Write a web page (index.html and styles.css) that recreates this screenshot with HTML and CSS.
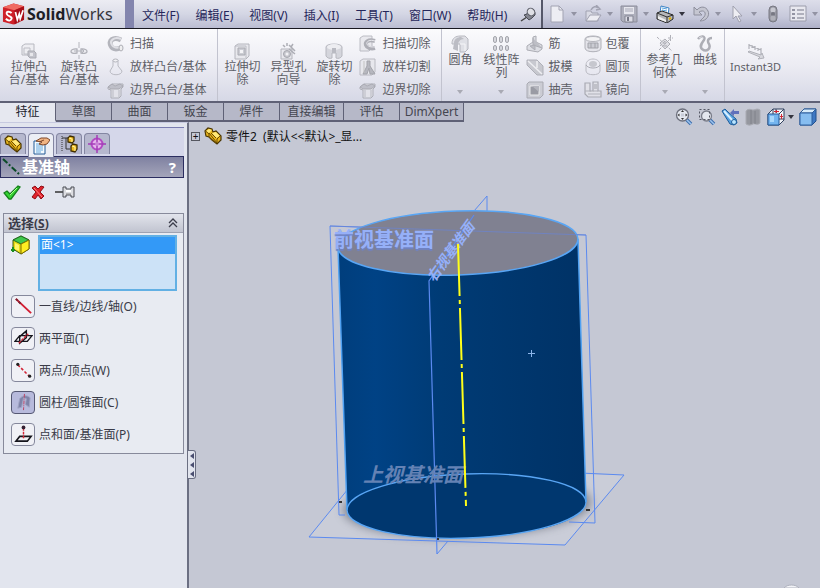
FILE: index.html
```
<!DOCTYPE html>
<html lang="zh-CN">
<head>
<meta charset="utf-8">
<title>SolidWorks</title>
<link rel="stylesheet" href="styles.css">
</head>
<body>
<svg class="sprite" aria-hidden="true">
  <defs>
    <linearGradient id="g-steel" x1="0" y1="0" x2="1" y2="1"><stop offset="0" stop-color="#ececf0"/><stop offset="1" stop-color="#9a9ba3"/></linearGradient>
    <symbol id="extrude" viewBox="0 0 18 18"><path d="M2 4l3-2h9v9l-3 2H2z" fill="#eeeef2" stroke="#adaeb6"/><path d="M4 6h6v6H4z" fill="none" stroke="#b5b6be"/><path d="M8 9h6l2 2v5h-6l-2-2z" fill="#bbbcc4" stroke="#9fa0a8"/><path d="M10 11h3v3h-3z" fill="#e6e6ea"/></symbol>
    <symbol id="revolve" viewBox="0 0 18 18"><path d="M9 0v6M9 13v4" stroke="#a9aab2"/><path d="M7 11c-8 2-8-5 0-4v4zM11 11c8 2 8-5 0-4v4z" fill="#ececf0" stroke="#a5a6ae" stroke-width="1.3"/><path d="M4 9h10M12 7l2 2-2 2" fill="none" stroke="#a9aab2"/></symbol>
    <symbol id="sweep" viewBox="0 0 18 18"><path d="M14 5C6 1 1 6 4 11c2 4 7 3 10 2" fill="none" stroke="#a9aab2" stroke-width="5"/><path d="M14 4C7 1 2 6 5 10c2 3 6 3 9 2" fill="none" stroke="#dcdce2" stroke-width="2"/><ellipse cx="14" cy="13" rx="2" ry="3" fill="#eee" stroke="#a0a1a9"/></symbol>
    <symbol id="loft" viewBox="0 0 18 18"><path d="M6 2h5v6l4 5c0 5-12 5-12 0l3-5z" fill="url(#g-steel)" stroke="#b1b2ba"/><ellipse cx="8.500" cy="2.500" rx="2.500" ry="1.500" fill="#f3f3f5" stroke="#a9aab2"/></symbol>
    <symbol id="boundary" viewBox="0 0 18 18"><path d="M1 6l4-3h11v3l-2 2v7l-2 2H4V9L1 8z" fill="#e4e4ea" stroke="#a5a6ae"/><path d="M1 6l4-3 3 2 5-2 3 2-4 3H4z" fill="#b9bac2" stroke="#a0a1a9"/><path d="M6 9v7M12 9v7" fill="none" stroke="#b3b4bc"/></symbol>
    <symbol id="cut-extrude" viewBox="0 0 18 18"><path d="M2 4l3-2h11v12l-3 3H2z" fill="#e7e7ec" stroke="#a9aab2"/><path d="M2 4h11v12" fill="none" stroke="#b3b4bc"/><path d="M5 6h7v7H5z" fill="#c6c7ce" stroke="#9d9ea6"/><path d="M7 8h3v3H7z" fill="#f5f5f7"/></symbol>
    <symbol id="hole" viewBox="0 0 18 18"><path d="M2 7h11v10H2z" fill="#e7e7ec" stroke="#a9aab2"/><circle cx="8" cy="12" r="3.500" fill="#c0c1c8" stroke="#999aa2"/><circle cx="8" cy="12" r="1.500" fill="#f2f2f4"/><path d="M10 7l6 5M8 1v3M4 3l2 2M12 5l2-3M10 3l6 6" stroke="#a0a1a9" stroke-width="1.500"/></symbol>
    <symbol id="cut-revolve" viewBox="0 0 18 18"><path d="M1 5c0-4 16-4 16 0v9c-1 2-4 3-6 2v-5H7v5c-2 1-5 0-6-2z" fill="#d0d1d8" stroke="#acadb5"/><ellipse cx="9" cy="5" rx="7" ry="3" fill="#ececf0"/><path d="M7 6h4v5H7z" fill="#b0b1b9"/></symbol>
    <symbol id="cut-sweep" viewBox="0 0 18 18"><path d="M1 3l3-2h9v12l-3 3H1z" fill="#e7e7ec" stroke="#b1b2ba"/><path d="M16 6C9 4 6 7 7 10c1 3 5 4 9 3" fill="none" stroke="#a2a3ab" stroke-width="4"/><path d="M16 6C10 4 7 7 8 9c1 3 4 3 8 3" fill="none" stroke="#e7e7ec"/></symbol>
    <symbol id="cut-loft" viewBox="0 0 18 18"><path d="M1 3l3-2h12v13l-3 3H1z" fill="#e7e7ec" stroke="#b1b2ba"/><path d="M8 3h3v5l5 8h-5l-1-6-2 6H4l4-8z" fill="#aeafb7" stroke="#97989f"/><path d="M5 3v12" stroke="#bbb"/></symbol>
    <symbol id="fillet" viewBox="0 0 18 18"><path d="M1 8c0-5 4-7 8-7h5l3 3v10l-3 3H9V9H1z" fill="#dcdde3" stroke="#adaeb6"/><path d="M3 8c0-4 4-6 7-6l3 2c-4 0-6 3-6 6v6l-5-2z" fill="#b2b3bb"/><path d="M9 9h5v7" fill="none" stroke="#f7f7f9"/></symbol>
    <symbol id="pattern" viewBox="0 0 18 18"><g fill="#d2d3da" stroke="#96979f"><rect x="1.500" y="1.500" width="3" height="6" rx="1.500"/><rect x="7.500" y="1.500" width="3" height="6" rx="1.500"/><rect x="13.500" y="1.500" width="3" height="6" rx="1.500"/><rect x="1.500" y="10.500" width="3" height="5" rx="1.500"/><rect x="7.500" y="10.500" width="3" height="5" rx="1.500"/><rect x="13.500" y="10.500" width="3" height="5" rx="1.500"/></g></symbol>
    <symbol id="rib" viewBox="0 0 18 18"><path d="M1 11l6-4V2l3-1v6l6 3v4l-4 3-11-2z" fill="#dadbe1" stroke="#9fa0a8"/><path d="M7 3v7l9 3M4 11l5-1v5z" fill="#b4b5bd" stroke="#a2a3ab"/></symbol>
    <symbol id="draft" viewBox="0 0 18 18"><path d="M1 2h10l6 6v9h-6L1 7z" fill="#c2c3ca" stroke="#a5a6ae"/><path d="M2 3l14 13M11 3v7" stroke="#efeff2" stroke-width="1.500"/></symbol>
    <symbol id="shell" viewBox="0 0 18 18"><path d="M1 3l2-2h14v13l-3 3H1z" fill="#c9cad1" stroke="#a0a1a9"/><path d="M4 5h9v9H4z" fill="#8f9098" stroke="#eee"/><path d="M6 5l7 6V5z" fill="#adaeb6"/></symbol>
    <symbol id="wrap" viewBox="0 0 18 18"><path d="M1 4c0-4 16-4 16 0v9c0 5-16 5-16 0z" fill="#e2e2e8" stroke="#a3a4ac"/><ellipse cx="9" cy="4" rx="7.500" ry="2.500" fill="#f3f3f5" stroke="#a9aab2"/><path d="M4 8h10v5H4zM7 8v5M11 8v5" fill="#c5c6cd" stroke="#94959d"/></symbol>
    <symbol id="dome" viewBox="0 0 18 18"><path d="M2 7c0-8 14-8 14 0v6c0 5-14 5-14 0z" fill="url(#g-steel)" stroke="#b1b2ba"/><path d="M2 7c2 4 12 4 14 0" fill="none" stroke="#9d9ea6"/><ellipse cx="9" cy="6" rx="4" ry="3" fill="#c0c1c8"/></symbol>
    <symbol id="mirror" viewBox="0 0 18 18"><path d="M1 2h5v8h3V1h5v9h3v6H4l-3-3z" fill="#e2e2e8" stroke="#a0a1a9" stroke-width="1.200"/><path d="M1 10h6M9 10h5M4 13h12" stroke="#a9aab2"/><path d="M10 3h3v5h-3z" fill="#bbbcc4"/></symbol>
    <symbol id="refgeo" viewBox="0 0 18 18"><path d="M4 8l5-4 5 5-5 5z" fill="#dcdce2" stroke="#a0a1a9"/><path d="M1 2l15 14M3 15L15 3M9 6v6M12 3h5M14.500 0v6M4 11l5-5" stroke="#a3a4ac" stroke-dasharray="3 1"/></symbol>
    <symbol id="curve" viewBox="0 0 18 18"><path d="M2 4c3-4 8-3 6 1-2 3-5 6-2 9 5 4 9-1 7-5-2-3-1-6 3-6" fill="none" stroke="#a1a2aa" stroke-width="2.500"/><path d="M3 3c3-2 5-1 3 2" fill="none" stroke="#e1e1e6"/></symbol>
    <symbol id="instant" viewBox="0 0 18 18"><path d="M2 2v5M2 3l12 5M14 6v7M5 3v3M8 4v4M11 6v3" stroke="#a5a6ae" fill="none" stroke-width="1.200"/><path d="M1 10l12 5-2 2 6-1-2-5-1 2-12-4z" fill="#d4d5db" stroke="#a5a6ae"/></symbol>
    <symbol id="pin" viewBox="0 0 18 18"><path d="M2 15l6-4" stroke="#444" stroke-width="1.500"/><path d="M5 9l3-1 1-4c2-3 8 0 7 5l-3 3-3 2z" fill="#83858f" stroke="#4a4c56"/><ellipse cx="12" cy="6" rx="4" ry="3.500" transform="rotate(42 12 6)" fill="#dfe0e6" stroke="#5a5c66"/></symbol>
    <symbol id="new" viewBox="0 0 18 18"><path d="M3 1h8l4 4v12H3z" fill="#ededf3" stroke="#a2a3b2"/><path d="M11 1v4h4" fill="none" stroke="#a2a3b2"/></symbol>
    <symbol id="open" viewBox="0 0 18 18"><path d="M2 16V6h5l1 2h6v8z" fill="#d9dae4" stroke="#a1a2b1"/><path d="M2 16l4-6h11l-4 6z" fill="#ececf2" stroke="#a1a2b1"/><path d="M7 5c2-4 5-4 7-2M12 0l4 4-4 1" fill="none" stroke="#a1a2b1" stroke-width="1.500"/></symbol>
    <symbol id="save" viewBox="0 0 18 18"><path d="M1 1h16v16H3l-2-2z" fill="#aeafbc" stroke="#8c8d9b"/><path d="M4 2h10v7H4z" fill="#e7e7ee"/><path d="M5 4h8M5 6h8" stroke="#a8a9b7"/><path d="M5 11h8v6H5z" fill="#dddde6" stroke="#858694"/><path d="M7 12h2v4H7z" fill="#777886"/></symbol>
    <symbol id="print" viewBox="0 0 18 18"><path d="M4 8l1-7 8 2-1 7z" fill="#fff" stroke="#3a82c5"/><path d="M6 3l5 1M6 5l5 1" stroke="#55a2df"/><path d="M1 8l5-2 11 4v4l-6 4-10-4z" fill="#b7b8bb" stroke="#222"/><path d="M1 8l10 4 6-2M11 12v5" fill="none" stroke="#333"/><path d="M2 11l8 4v2l-8-3z" fill="#eee"/><path d="M13 14l2-1" stroke="#e0b000" stroke-width="2"/></symbol>
    <symbol id="undo" viewBox="0 0 18 18"><path d="M2 2v8h8L7 7c5-3 8 1 5 5l-4 4c7 0 10-6 8-10C14 1 8 1 5 5z" fill="#c5c6d1" stroke="#8e8f9d"/></symbol>
    <symbol id="cursor" viewBox="0 0 18 18"><path d="M5 1v13l3-3 3 6 2-1-3-5h4z" fill="#eeeef3" stroke="#9fa0ae"/></symbol>
    <symbol id="traffic" viewBox="0 0 18 18"><rect x="5" y="1" width="8" height="16" rx="4" fill="#9899a3" stroke="#787983"/><circle cx="9" cy="5" r="2.500" fill="#c7c8d0"/><circle cx="9" cy="9" r="2" fill="#777882"/><circle cx="9" cy="13" r="2.500" fill="#b0b1b9"/></symbol>
    <symbol id="options" viewBox="0 0 18 18"><path d="M1 1h16v15H1z" fill="#e8e8ef" stroke="#9b9cab"/><path d="M3 4h3v2H3zM3 8h3v2H3zM3 12h3v2H3z" fill="#9394a3"/><path d="M8 5h7M8 9h7M8 13h7" stroke="#9c9dac" stroke-width="1.500"/></symbol>
    <symbol id="zoomfit" viewBox="0 0 18 18"><path d="M11 11l5 5" stroke="#3e6fae" stroke-width="3.500"/><path d="M11 11l5 5" stroke="#9dc4ee" stroke-width="1.500"/><circle cx="7.500" cy="7" r="6" fill="#e4e7ef" stroke="#6d707d" stroke-width="1.300"/><path d="M7.500 2l1.500 2H6zM7.500 12L6 10h3zM2.500 7l2-1.500v3zM12.500 7l-2-1.500v3z" fill="#333"/><path d="M6 5.500h3v3H6z" fill="#c8ccd8"/></symbol>
    <symbol id="zoomarea" viewBox="0 0 18 18"><path d="M11 11l5 5" stroke="#3e6fae" stroke-width="3.500"/><path d="M11 11l5 5" stroke="#9dc4ee" stroke-width="1.500"/><circle cx="8.500" cy="8" r="5" fill="#e4e7ef" stroke="#7a7d89" stroke-width="1.300"/><path d="M1.500 1.500h10v10h-10z" fill="none" stroke="#555865" stroke-dasharray="2 2"/></symbol>
    <symbol id="prev" viewBox="0 0 18 18"><path d="M1 3l3-2 3 3 8 7 1 4-3 2-4-1-5-8z" fill="#58a2e0" stroke="#1d5c9b"/><path d="M3 3l9 10" stroke="#d9f0ff" stroke-width="2"/><circle cx="13" cy="14" r="2.500" fill="#b9e5ff" stroke="#1d5c9b"/><path d="M9 5l4-4v2h5v3h-5v2z" fill="#6070bb"/></symbol>
    <symbol id="section" viewBox="0 0 18 18"><path d="M2 3c3-3 5-1 7-1s4-2 7 0v13c-3 3-5 0-7 1s-4 2-7 0z" fill="#95979f" stroke="#a9abb3"/><path d="M7 2v14M11 3v13" stroke="#80828a"/></symbol>
    <symbol id="orient" viewBox="0 0 18 18"><path d="M1 6l5-5h11v11l-5 5H1z" fill="#f2f4f8" stroke="#31415e"/><path d="M1 6h11v11H1z" fill="#74b5ef" stroke="#245a99"/><path d="M12 6l5-5M6 1v5M12 11h5M9 1v4" stroke="#31415e"/><path d="M7 3.500h5M9.500 2v3M13 8.500h3M14.500 6v5" stroke="#d02734"/><path d="M3 8h4v6H3z" fill="#a9d8fb"/></symbol>
    <symbol id="shaded" viewBox="0 0 18 18"><path d="M1 5l4-4h12v12l-4 4H1z" fill="#3d78c3" stroke="#23508c"/><path d="M1 5l4-4h12l-4 4z" fill="#d7ecfb" stroke="#315f9a"/><path d="M1 5h12v12H1z" fill="#86bdf0" stroke="#2c5f9f"/></symbol>
    <symbol id="part" viewBox="0 0 18 18"><path d="M1 4l3-3 4 1 1 3 3-1 5 5v4l-4 4-5-4-3-3-3-1z" fill="#e8b51c" stroke="#4a3500" stroke-width="1.200"/><path d="M2 4l3-2 3 1-3 3zM8 6l4-1 4 4-4 2z" fill="#ffe978"/><path d="M5 6l8 10v-4l3-3M1.500 4l3.500 3v3l7 6M7 6l5 5" fill="none" stroke="#6b4c00"/></symbol>
    <symbol id="property" viewBox="0 0 18 18"><path d="M2 4h11v13H2z" fill="#f3faff" stroke="#235a96"/><path d="M4 7h7M4 9h7M4 11h7M4 13h7M4 15h5" stroke="#67a8dc"/><path d="M4 4l5-3h6l3 2-3 4-4 1-4-1 3-2z" fill="#f1b483" stroke="#80482b"/><path d="M7 5l5-2" stroke="#80482b"/></symbol>
    <symbol id="config" viewBox="0 0 18 18"><path d="M2 1v16" stroke="#333" stroke-dasharray="1 1"/><path d="M2 3h6M6 3v11h4" fill="none" stroke="#333"/><path d="M8 3l2-2 4 1v4l-2 2-4-1zM11 11l2-2 4 1v4l-2 3-4-1z" fill="#efbb20" stroke="#3e2c00" stroke-width="1.300"/><path d="M9 3l3 1v3M12 11l3 1v4" fill="none" stroke="#fff2a0"/></symbol>
    <symbol id="dimx" viewBox="0 0 18 18"><circle cx="9" cy="9" r="5.500" fill="#e6b4ed" stroke="#b24ac3" stroke-width="2"/><path d="M9 0v18M0 9h18" stroke="#a33cb6" stroke-width="1.500"/><circle cx="9" cy="9" r="2" fill="#cc84d8"/></symbol>
    <symbol id="axis" viewBox="0 0 18 18"><path d="M1 1l16 15" stroke="#0b4b27" stroke-width="2" stroke-dasharray="6 2 2 2"/></symbol>
    <symbol id="ok" viewBox="0 0 18 18"><path d="M1 10l3-2 3 3 8-8 2 1-9 12H6z" fill="#36d334" stroke="#16801c" stroke-width="1.300"/><path d="M7 12l7-7" stroke="#aaff8b"/></symbol>
    <symbol id="cancel" viewBox="0 0 18 18"><path d="M3 5l3-2 3 3 3-3 3 1-4 5 4 4-3 3-3-4-3 4-3-2 4-5z" fill="#e0222b" stroke="#8f1017"/><path d="M5 5l8 9" stroke="#ff8683"/></symbol>
    <symbol id="pushpin" viewBox="0 0 20 18"><path d="M0 9h9" stroke="#333" stroke-width="1.500"/><path d="M8 4h3v2h5V4h3v10h-3v-2h-5v2H8z" fill="#dddee2" stroke="#4b4d55"/><path d="M11 7h5v2h-5z" fill="#fff"/><path d="M11 11h5" stroke="#888"/></symbol>
    <symbol id="cube" viewBox="0 0 20 20"><path d="M2 5l8-4 8 4v9l-8 5-8-5z" fill="#e7db12" stroke="#3e5910"/><path d="M2 5l8-4 8 4-8 4z" fill="#3fc84c" stroke="#226b26"/><path d="M10 9v10l8-5V5z" fill="#ffee22" stroke="#806f00"/><path d="M4 8l4 2v6l-4-2z" fill="#fff66a"/><path d="M2 12v5M0 15h4" stroke="#1b8f24" stroke-width="2"/></symbol>
    <symbol id="line" viewBox="0 0 20 20"><path d="M2 2l16 15" stroke="#d31d32" stroke-width="2"/><path d="M2 2l5 5" stroke="#7a2030" stroke-width="2" stroke-dasharray="3 1"/></symbol>
    <symbol id="planes" viewBox="0 0 20 20"><path d="M1 13l5-6h13l-5 6zM6 15V8l7-6v7z" fill="none" stroke="#15151c" stroke-width="1.500"/><path d="M5 15L15 5" stroke="#d3293a" stroke-width="1.500" stroke-dasharray="3 1"/></symbol>
    <symbol id="points" viewBox="0 0 20 20"><path d="M4 4l12 12" stroke="#d32537" stroke-width="1.700" stroke-dasharray="3 2"/><circle cx="4" cy="3.500" r="1.700" fill="#222"/><circle cx="16.500" cy="16" r="1.700" fill="#222"/></symbol>
    <symbol id="cone" viewBox="0 0 20 20"><path d="M4 16l2-10c3-4 8-4 11-1l-1 10-4-3 1-6-3-1-2 10z" fill="#7f83a9" stroke="#a0a4c4"/><path d="M11 1l-1 17" stroke="#bf405f" stroke-dasharray="4 1 1 1"/></symbol>
    <symbol id="pointplane" viewBox="0 0 20 20"><path d="M2 17l4-5h12l-4 5z" fill="none" stroke="#15151c" stroke-width="1.700"/><path d="M10 3v12" stroke="#d32537" stroke-width="1.500" stroke-dasharray="3 1"/><circle cx="10" cy="2.500" r="2" fill="#342032"/></symbol>
    <symbol id="chevrons" viewBox="0 0 10 10"><path d="M1 5l4-4 4 4M1 9l4-4 4 4" fill="none" stroke="#3c3e4c" stroke-width="1.300"/></symbol>
  </defs>
</svg>

<div class="app">
  <header class="titlebar">
    <div class="brand">
      <svg class="cube-logo" viewBox="0 0 24 24" role="img" aria-label="SW">
        <path d="M1 5l11-4 11 3v14l-11 5L1 20z" fill="#cf2029"/><path d="M1 5l11-4 11 3-10 4z" fill="#f06a62"/><path d="M13 8l10-4v14l-10 5z" fill="#a80f19"/>
        <path d="M10 11C8 9 4 9 5 12s6 2 5 5-4 2-6 0" fill="none" stroke="#fff" stroke-width="2"/><path d="M14 10l2 8 2-6 1 5 3-9" fill="none" stroke="#fff" stroke-width="1.800"/>
      </svg>
      <span class="wordmark"><b>Solid</b>Works</span>
    </div>
    <nav class="menu">
      <button>文件(F)</button><button>编辑(E)</button><button>视图(V)</button><button>插入(I)</button><button>工具(T)</button><button>窗口(W)</button><button>帮助(H)</button>
      <button class="pin" aria-label="固定"><svg class="ico"><use href="#pin"/></svg></button>
    </nav>
    <div class="quick">
      <button class="tool drop" aria-label="新建"><svg class="ico"><use href="#new"/></svg></button>
      <button class="tool drop" aria-label="打开"><svg class="ico"><use href="#open"/></svg></button>
      <button class="tool drop" aria-label="保存"><svg class="ico"><use href="#save"/></svg></button>
      <button class="tool drop live" aria-label="打印"><svg class="ico"><use href="#print"/></svg></button>
      <button class="tool drop" aria-label="撤销"><svg class="ico"><use href="#undo"/></svg></button>
      <button class="tool drop" aria-label="选择"><svg class="ico"><use href="#cursor"/></svg></button>
      <button class="tool" aria-label="重建"><svg class="ico"><use href="#traffic"/></svg></button>
      <button class="tool drop" aria-label="选项"><svg class="ico"><use href="#options"/></svg></button>
    </div>
  </header>

  <section class="ribbon">
    <div class="group">
      <button class="big"><svg class="ico"><use href="#extrude"/></svg><span>拉伸凸<br>台/基体</span></button>
      <button class="big"><svg class="ico"><use href="#revolve"/></svg><span>旋转凸<br>台/基体</span></button>
      <div class="stack">
        <button class="small"><svg class="ico"><use href="#sweep"/></svg>扫描</button>
        <button class="small"><svg class="ico"><use href="#loft"/></svg>放样凸台/基体</button>
        <button class="small"><svg class="ico"><use href="#boundary"/></svg>边界凸台/基体</button>
      </div>
    </div>
    <div class="group cuts">
      <button class="big"><svg class="ico"><use href="#cut-extrude"/></svg><span>拉伸切<br>除</span></button>
      <button class="big"><svg class="ico"><use href="#hole"/></svg><span>异型孔<br>向导</span></button>
      <button class="big"><svg class="ico"><use href="#cut-revolve"/></svg><span>旋转切<br>除</span></button>
      <div class="stack">
        <button class="small"><svg class="ico"><use href="#cut-sweep"/></svg>扫描切除</button>
        <button class="small"><svg class="ico"><use href="#cut-loft"/></svg>放样切割</button>
        <button class="small"><svg class="ico"><use href="#boundary"/></svg>边界切除</button>
      </div>
    </div>
    <div class="group features">
      <button class="big menu-btn"><svg class="ico"><use href="#fillet"/></svg><span>圆角</span></button>
      <button class="big menu-btn"><svg class="ico"><use href="#pattern"/></svg><span>线性阵<br>列</span></button>
      <div class="stack">
        <button class="small"><svg class="ico"><use href="#rib"/></svg>筋</button>
        <button class="small"><svg class="ico"><use href="#draft"/></svg>拔模</button>
        <button class="small"><svg class="ico"><use href="#shell"/></svg>抽壳</button>
      </div>
      <div class="stack">
        <button class="small"><svg class="ico"><use href="#wrap"/></svg>包覆</button>
        <button class="small"><svg class="ico"><use href="#dome"/></svg>圆顶</button>
        <button class="small"><svg class="ico"><use href="#mirror"/></svg>镜向</button>
      </div>
    </div>
    <div class="group reference">
      <button class="big menu-btn"><svg class="ico"><use href="#refgeo"/></svg><span>参考几<br>何体</span></button>
      <button class="big menu-btn"><svg class="ico"><use href="#curve"/></svg><span>曲线</span></button>
    </div>
    <div class="group instant">
      <button class="big"><svg class="ico"><use href="#instant"/></svg><span>Instant3D</span></button>
    </div>
  </section>

  <div class="tabrow">
    <nav class="tabs">
      <button class="tab active">特征</button><button class="tab">草图</button><button class="tab">曲面</button><button class="tab">钣金</button><button class="tab">焊件</button><button class="tab wide">直接编辑</button><button class="tab">评估</button><button class="tab wide">DimXpert</button>
    </nav>
    <div class="viewtools">
      <button aria-label="整屏显示全图"><svg class="ico"><use href="#zoomfit"/></svg></button>
      <button aria-label="局部放大"><svg class="ico"><use href="#zoomarea"/></svg></button>
      <button aria-label="上一视图"><svg class="ico"><use href="#prev"/></svg></button>
      <button aria-label="剖面视图"><svg class="ico"><use href="#section"/></svg></button>
      <button class="drop live" aria-label="视图定向"><svg class="ico"><use href="#orient"/></svg></button>
      <button aria-label="显示样式"><svg class="ico"><use href="#shaded"/></svg></button>
    </div>
  </div>

  <main class="work">
    <aside class="panel">
      <nav class="ptabs">
        <button aria-label="设计树"><svg class="ico"><use href="#part"/></svg></button>
        <button class="active" aria-label="属性"><svg class="ico"><use href="#property"/></svg></button>
        <button aria-label="配置"><svg class="ico"><use href="#config"/></svg></button>
        <button aria-label="DimXpert"><svg class="ico"><use href="#dimx"/></svg></button>
      </nav>
      <div class="ptitle"><svg class="ico"><use href="#axis"/></svg><h1>基准轴</h1><button class="help">?</button></div>
      <div class="confirm">
        <button aria-label="确定"><svg class="ico"><use href="#ok"/></svg></button>
        <button aria-label="取消"><svg class="ico"><use href="#cancel"/></svg></button>
        <button aria-label="保持可见"><svg class="ico pushpin"><use href="#pushpin"/></svg></button>
      </div>
      <section class="box">
        <header class="boxhead"><h2>选择<span class="key">(<u>S</u>)</span></h2><button aria-label="折叠"><svg class="chev"><use href="#chevrons"/></svg></button></header>
        <div class="pick">
          <svg class="pickicon"><use href="#cube"/></svg>
          <ul class="list" role="listbox" aria-label="选择"><li role="option" aria-selected="true">面&lt;1&gt;</li></ul>
        </div>
        <div class="kinds">
          <button class="kind"><i><svg><use href="#line"/></svg></i>一直线/边线/轴(O)</button>
          <button class="kind"><i><svg><use href="#planes"/></svg></i>两平面(T)</button>
          <button class="kind"><i><svg><use href="#points"/></svg></i>两点/顶点(W)</button>
          <button class="kind on" aria-pressed="true"><i><svg><use href="#cone"/></svg></i>圆柱/圆锥面(C)</button>
          <button class="kind"><i><svg><use href="#pointplane"/></svg></i>点和面/基准面(P)</button>
        </div>
      </section>
      <button class="grip" aria-label="收起面板"><span></span><span></span><span></span></button>
    </aside>

    <section class="viewport">
      <svg class="scene" viewBox="189 122 631 466" preserveAspectRatio="xMidYMid meet">
        <defs>
          <linearGradient id="side" x1="0" x2="1" y1="0" y2="0"><stop offset="0" stop-color="#003e7c"/><stop offset=".15" stop-color="#004285"/><stop offset=".42" stop-color="#003b75"/><stop offset="1" stop-color="#003266"/></linearGradient>
          <filter id="soft" x="-20%" y="-40%" width="140%" height="180%"><feGaussianBlur stdDeviation="5"/></filter>
        </defs>
        <path d="M309 537L565 545 624 475 361 471z" fill="#cfd1dc" opacity=".5"/>
        <ellipse cx="467" cy="506" rx="124" ry="31" transform="rotate(-2 467 506)" fill="#5f6470" opacity=".7" filter="url(#soft)"/>
        <g fill="none" stroke="#5b8af0">
          <path d="M361 473L309 537 565 545 624 475 580 473"/>
          <path d="M345 515h-6L330 226 586 235 595 523 569 522"/>
          <path d="M487 212V196L474 211M437 554l11-13"/>
        </g>
        <path d="M338 247L347 510C353 547 579 547 586 502L578 239z" fill="url(#side)"/>
        <ellipse cx="466.500" cy="506" rx="119.500" ry="32" transform="rotate(-2 466.500 506)" fill="#00376f" stroke="#59a6f5" stroke-width="1.300"/>
        <path d="M338 247L347 510M578 239L586 502" stroke="#4fa1f2" stroke-width="1.500"/>
        <ellipse cx="458" cy="243" rx="120" ry="32" transform="rotate(-2 458 243)" fill="#808191" stroke="#59a6f5" stroke-width="1.500"/>
        <path d="M330 226L586 235" stroke="#6a84d3" opacity=".7"/>
        <path d="M474 215L429 281 437 554" fill="none" stroke="#5b8af0" stroke-width="1.200"/>
        <g class="planelabel">
          <text x="334" y="247" class="front">前视基准面</text>
          <text x="434" y="283" class="right" transform="rotate(-54 434 283)">右视基准面</text>
          <text x="363" y="482" class="top">上视基准面</text>
        </g>
        <path d="M458 244L466 506" stroke="#ffff19" stroke-width="2" stroke-dasharray="52 4 4 4"/>
        <path d="M528 353.500h7M531.500 350v7" stroke="#8cb5e9"/>
        <path d="M339 502h3M586 510h4M437 539h2" stroke="#333" stroke-width="2"/>
        <path d="M784 588c3-4 12-4 15 0z" fill="#f2f3f7" stroke="#aeb1bd"/>
      </svg>
      <div class="tree"><span class="plus">+</span><svg class="ico"><use href="#part"/></svg><span class="partname">零件2&nbsp; (默认&lt;&lt;默认&gt;_显...</span></div>
    </section>
  </main>
</div>
</body>
</html>
```
FILE: styles.css
```
* { box-sizing: border-box; }
body {
  margin: 0;
  font: 12px/13px "Noto Sans", "Noto Sans CJK SC", sans-serif;
  color: #3a3b48;
}
button {
  margin: 0;
  padding: 0;
  border: 0;
  background: none;
  color: inherit;
  font: inherit;
  white-space: nowrap;
}
h1, h2, ul { margin: 0; padding: 0; list-style: none; }
.sprite { display: none; }
.ico { display: block; flex: none; width: 18px; height: 18px; }
.app {
  display: flex;
  flex-direction: column;
  min-height: 100vh;
  background: #c5c8d4;
  overflow: hidden;
}

/* title bar */
.titlebar {
  display: flex;
  height: 29px;
  border-bottom: 1px solid #17171f;
  background: linear-gradient(#e5e6ef, #d4d6e4 50%, #bbbdd2);
}
.brand {
  display: flex;
  align-items: center;
  gap: 2px;
  width: 134px;
  padding-left: 2px;
  border-right: 9px solid #8385ae;
  background: linear-gradient(#ececf3, #d0d2e0);
}
.cube-logo { width: 23px; height: 24px; }
.wordmark { font-size: 16px; line-height: 20px; color: #34353c; }
.wordmark b { color: #1d1e25; }
.menu {
  display: flex;
  align-items: center;
  gap: 16px;
  padding: 2px 4px 0 8px;
  border-right: 2px solid #555769;
  color: #25265a;
}
.pin { margin-left: -4px; }
.quick {
  display: flex;
  align-items: center;
  flex: 1;
  gap: 7px;
  padding-left: 5px;
  background: linear-gradient(#dddeea, #c7c9db 60%, #aeb0c8);
}
.drop { display: flex; align-items: center; gap: 5px; }
.drop::after {
  content: "";
  border: 3px solid transparent;
  border-top: 4px solid #9293a3;
  border-bottom: 0;
}
.live::after { border-top-color: #33343e; }

/* ribbon */
.ribbon {
  display: flex;
  height: 74px;
  border-bottom: 2px solid #5f6176;
  background: linear-gradient(#fbfbfd, #ececf3 50%, #d6d8e6);
  color: #5d5e66;
}
.ribbon .ico { opacity: .85; }
.group { display: flex; position: relative; gap: 2px; padding: 3px 11px 0 5px; border-right: 1px solid #c2c3cf; }
.big {
  display: flex;
  flex-direction: column;
  align-items: center;
  justify-content: flex-start;
  gap: 0;
  width: 48px;
  padding-top: 10px;
}
.stack { display: flex; flex-direction: column; }
.small { display: flex; align-items: center; gap: 5px; height: 23px; }
.group > .stack { margin-left: 2px; }
.cuts { gap: 0; padding-left: 1px; }
.cuts .big { width: 46px; }
.features { gap: 2px; padding: 3px 10px 0 0; }
.features .big { width: 36px; }
.features .big + .big { width: 42px; }
.features .stack + .stack { margin-left: 9px; }
.features .small { gap: 4px; }
.menu-btn { position: relative; padding-top: 3px; }
.menu-btn::after {
  content: "";
  margin-top: auto;
  margin-bottom: 7px;
  border: 3px solid transparent;
  border-top: 4px solid #a9aab4;
  border-bottom: 0;
}
.reference { gap: 0; padding: 3px 0 0 2px; }
.reference .big { width: 44px; }
.reference .big + .big { width: 37px; }
.instant { padding-left: 4px; border: 0; font-size: 11px; }
.instant .big { width: 54px; }

/* command tabs */
.tabrow { display: flex; justify-content: space-between; height: 19px; }
.tabs { display: flex; }
.tab {
  width: 56px;
  height: 19px;
  border-right: 1px solid #5f6176;
  border-bottom: 2px solid #5f6176;
  background: #b6b8c8;
  color: #44454f;
}
.tab.active { border-bottom-color: #e6e8f0; background: #e6e8f0; color: #20212a; }
.tab.wide { width: 64px; }
.viewtools { display: flex; gap: 5px; height: 18px; margin-top: 5px; padding-right: 3px; }
.viewtools .drop { gap: 3px; }

/* work area */
.work { display: flex; flex: 1; }
.panel {
  position: relative;
  width: 189px;
  padding: 4px 3px 0 0;
  border-right: 2px solid #6b6f82;
  background: #e2e5ee;
  border-top: 1px solid #c7cae0;
}
.ptabs { display: flex; gap: 2px; height: 30px; padding-top: 5px; border-top: 1px solid #7a7db0; background: #d5d7ea; }
.ptabs button {
  display: flex;
  align-items: center;
  justify-content: center;
  width: 26px;
  height: 21px;
  border: 1px solid #8486a2;
  border-bottom: 0;
  border-radius: 4px 4px 0 0;
  background: #b6b8ce;
}
.ptabs .active { height: 24px; background: #eceef5; }
.ptitle {
  display: flex;
  align-items: center;
  gap: 2px;
  height: 22px;
  margin-top: -1px;
  padding: 0 7px 0 1px;
  border: 1px solid #2b2d60;
  background: linear-gradient(#7f81a1, #a4a5ba);
  color: #fff;
}
.ptitle h1 { font-size: 16px; line-height: 20px; }
.help { margin-left: auto; font-size: 15px; font-weight: bold; }
.confirm { display: flex; align-items: flex-start; gap: 8px; padding: 5px 3px 0; height: 35px; }
.confirm .pushpin { width: 20px; }
.box { margin-left: 3px; border: 1px solid #878a9b; background: #e8ebf2; }
.boxhead {
  display: flex;
  align-items: center;
  justify-content: space-between;
  height: 19px;
  padding: 0 5px 0 4px;
  border-bottom: 1px solid #9fa2b2;
  background: linear-gradient(#e2e4ec, #c1c4d0);
}
.boxhead h2 { font-size: 13px; line-height: 17px; }
.boxhead .key { font-size: 12px; }
.chev { display: block; width: 10px; height: 10px; }
.pick { display: flex; gap: 7px; padding: 2px 6px 0 7px; }
.pickicon { flex: none; width: 20px; height: 20px; }
.list { flex: 1; height: 56px; border: 2px solid #62b0e4; background: #cce2f7; }
.list li { height: 17px; margin: 0; padding-left: 1px; background: #3399f7; color: #fff; line-height: 16px; }
.kinds { display: flex; flex-direction: column; gap: 7px; padding: 3px 7px 6px; }
.kind { display: flex; align-items: center; gap: 4px; height: 25px; }
.kind i {
  display: flex;
  align-items: center;
  justify-content: center;
  width: 24px;
  height: 23px;
  border: 1px solid #85889c;
  border-radius: 4px;
  background: #f0f1f6;
}
.kind svg { width: 19px; height: 19px; }
.kind.on i { border-color: #555873; background: #b7badc; }
.grip {
  position: absolute;
  top: 327px;
  right: -9px;
  display: flex;
  flex-direction: column;
  align-items: center;
  justify-content: space-around;
  width: 8px;
  height: 29px;
  border: 1px solid #686c80;
  border-left: 0;
  border-radius: 0 3px 3px 0;
  background: #e2e5ee;
  z-index: 1;
}
.grip span { border: 3px solid transparent; border-right: 4px solid #4a4e70; border-left: 0; }

/* graphics area */
.viewport { position: relative; flex: 1; }
.scene { position: absolute; inset: 0; width: 100%; height: 100%; }
.tree { position: absolute; top: 5px; left: 2px; display: flex; align-items: center; gap: 4px; color: #111; }
.plus { display: block; width: 9px; height: 9px; border: 1px solid #55575f; font-size: 10px; line-height: 7px; text-align: center; }
.planelabel text { fill: #96b0f8; }
.planelabel .front { font-size: 20px; font-weight: bold; text-shadow: 0 2px 1px #6f82c4; }
.planelabel .right { font-size: 14px; font-weight: bold; font-style: italic; }
.planelabel .top { font-size: 20px; font-weight: bold; font-style: italic; fill: #6482b4; }
```
